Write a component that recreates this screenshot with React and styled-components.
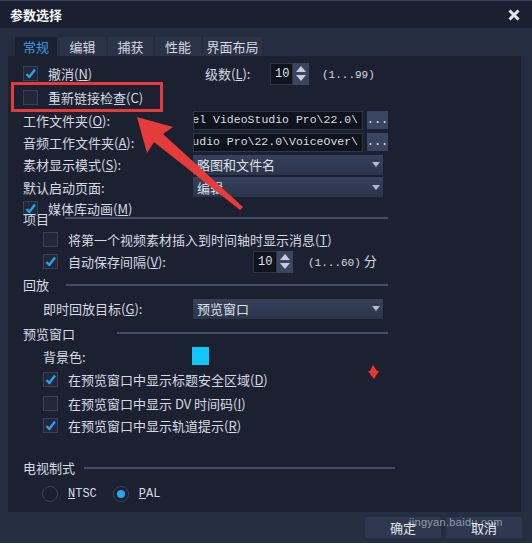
import styled, { createGlobalStyle } from 'styled-components';

const GlobalStyle = createGlobalStyle`
  html, body { margin: 0; padding: 0; background: #252d40; }
  body { font-family: "Noto Sans CJK SC", "Noto Sans", sans-serif; }
`;

const Window = styled.div`
  position: relative;
  width: 532px;
  height: 543px;
  background: #252d40;
  display: flex;
  flex-direction: column;
  overflow: hidden;
  color: #d6dae2;
  font-size: 13px;
  line-height: 1;
`;

const TitleBar = styled.div`
  height: 28px;
  box-sizing: border-box;
  border-top: 1px solid #3a4259;
  background: #1b2030;
  display: flex;
  align-items: center;
  justify-content: space-between;
  padding: 0 12px 0 10px;
`;

const Title = styled.div`
  font-weight: bold;
  font-size: 13px;
  color: #f4f5f8;
`;

const TabRow = styled.div`
  height: 28px;
  display: flex;
  align-items: flex-end;
  gap: 2px;
  padding-left: 15px;
`;

const Tab = styled.div`
  width: ${(p) => p.$w}px;
  height: 19px;
  display: flex;
  align-items: center;
  justify-content: center;
  background: ${(p) => (p.$active ? '#1c2131' : '#2b3348')};
  color: ${(p) => (p.$active ? '#3a9be2' : '#d5d9e1')};
`;

const Panel = styled.div`
  margin: 0 11px 0 8px;
  height: 456px;
  box-sizing: border-box;
  background: #1c2131;
  padding: 6px 0 0 15px;
  display: flex;
  flex-direction: column;
`;

const Row = styled.div`
  height: ${(p) => p.$h}px;
  margin-top: ${(p) => p.$mt || 0}px;
  padding-left: ${(p) => p.$indent || 0}px;
  display: flex;
  align-items: center;
  flex-shrink: 0;
`;

const CheckItem = styled.div`
  display: flex;
  align-items: center;
  gap: 10px;
  width: ${(p) => (p.$w ? `${p.$w}px` : 'auto')};
  flex-shrink: 0;
`;

const Box = styled.div`
  width: 15px;
  height: 15px;
  box-sizing: border-box;
  background: #222839;
  border: 1px solid #394157;
  display: flex;
  align-items: center;
  justify-content: center;
`;

const Label = styled.div`
  width: ${(p) => (p.$w ? `${p.$w}px` : 'auto')};
  flex-shrink: 0;
  white-space: nowrap;
`;

const Mono = styled.span`
  font-family: "Liberation Mono", monospace;
  font-size: 11px;
`;

const PathField = styled.div`
  width: 170px;
  height: 19px;
  box-sizing: border-box;
  background: #0f131c;
  border: 1px solid #2f3649;
  display: flex;
  align-items: center;
  justify-content: flex-end;
  overflow: hidden;
  white-space: nowrap;
  padding-right: 4px;
  font-family: "Liberation Mono", monospace;
  font-size: 11.5px;
  color: #d9dde4;
`;

const Browse = styled.div`
  width: 21px;
  height: 18px;
  margin-left: 4px;
  background: #3a4561;
  color: #e6e9ef;
  display: flex;
  align-items: center;
  justify-content: center;
  font-family: "Liberation Mono", monospace;
  font-size: 12px;
`;

const Select = styled.div`
  width: 190px;
  height: 20px;
  box-sizing: border-box;
  background: linear-gradient(#37415b, #2c344b);
  display: flex;
  align-items: center;
  justify-content: space-between;
  padding: 0 3px 0 4px;
  color: #dde1e8;
`;

const Caret = styled.div`
  width: 0;
  height: 0;
  border-left: 4px solid transparent;
  border-right: 4px solid transparent;
  border-top: 5px solid #b3bac8;
`;

const Spin = styled.div`
  display: flex;
  height: 22px;
`;

const SpinValue = styled.div`
  width: ${(p) => p.$w}px;
  box-sizing: border-box;
  background: #0f131c;
  border: 1px solid #2f3649;
  display: flex;
  align-items: center;
  padding-left: 4px;
  font-family: "Liberation Mono", monospace;
  font-size: 12px;
  color: #dfe2e8;
`;

const SpinArrows = styled.div`
  width: 16px;
  background: #3a4560;
  display: flex;
  flex-direction: column;
  align-items: center;
  justify-content: center;
  gap: 3px;
`;

const Tri = styled.div`
  width: 0;
  height: 0;
  border-left: 5px solid transparent;
  border-right: 5px solid transparent;
  ${(p) => (p.$up ? 'border-bottom: 6px solid #c9ceda;' : 'border-top: 6px solid #c9ceda;')}
`;

const Range = styled.div`
  margin-left: ${(p) => p.$ml}px;
  white-space: nowrap;
`;

const Group = styled.div`
  width: ${(p) => p.$w}px;
  height: ${(p) => p.$h}px;
  margin-top: ${(p) => p.$mt || 0}px;
  display: flex;
  align-items: center;
  flex-shrink: 0;
`;

const GroupLine = styled.div`
  flex: 1;
  height: 2px;
  margin-left: ${(p) => p.$gap}px;
  background: #444d67;
`;

const Swatch = styled.div`
  width: 17px;
  height: 18px;
  background: #12c6f6;
`;

const RadioItem = styled.div`
  display: flex;
  align-items: center;
  gap: 10px;
  margin-right: 16px;
  font-family: "Liberation Mono", monospace;
  font-size: 12px;
`;

const RadioDot = styled.div`
  width: 16px;
  height: 16px;
  box-sizing: border-box;
  border-radius: 50%;
  background: #1a1f2d;
  border: 1px solid #3a4257;
  display: flex;
  align-items: center;
  justify-content: center;
  &::after {
    content: '';
    width: 8px;
    height: 8px;
    border-radius: 50%;
    background: ${(p) => (p.$on ? '#1fa9f1' : 'transparent')};
  }
`;

const Footer = styled.div`
  height: 31px;
  display: flex;
  align-items: center;
  justify-content: flex-end;
  gap: 5px;
  padding-right: 10px;
`;

const Button = styled.div`
  width: 76px;
  height: 21px;
  background: #2e3850;
  color: #e4e7ed;
  display: flex;
  align-items: center;
  justify-content: center;
`;

const RedBox = styled.div`
  position: absolute;
  left: 11px;
  top: 82px;
  width: 152px;
  height: 30px;
  box-sizing: border-box;
  border: 3px solid #e63b3b;
`;

const Overlay = styled.svg`
  position: absolute;
  left: 0;
  top: 0;
  pointer-events: none;
`;

const Watermark = styled.div`
  position: absolute;
  left: 409px;
  top: 517px;
  font-family: "Liberation Sans", sans-serif;
  font-size: 11px;
  color: rgba(235, 238, 245, 0.55);
  letter-spacing: 0.3px;
`;

const Check = ({ on }) => (
  <Box>
    {on && (
      <svg width="13" height="13" viewBox="0 0 13 13">
        <path d="M2.5 7 L5.3 10 L11 2.5" fill="none" stroke="#2c9fea" strokeWidth="2.4" strokeLinejoin="round" />
      </svg>
    )}
  </Box>
);

const CheckRow = ({ on, text, w }) => (
  <CheckItem $w={w}>
    <Check on={on} />
    <span>{text}</span>
  </CheckItem>
);

const SpinBox = ({ value, w }) => (
  <Spin>
    <SpinValue $w={w}>{value}</SpinValue>
    <SpinArrows>
      <Tri $up />
      <Tri />
    </SpinArrows>
  </Spin>
);

const Dropdown = ({ value }) => (
  <Select>
    <span>{value}</span>
    <Caret />
  </Select>
);

const GroupHeader = ({ title, gap, w = 365, h, mt }) => (
  <Group $w={w} $h={h} $mt={mt}>
    <span>{title}</span>
    <GroupLine $gap={gap} />
  </Group>
);

const tabs = [
  { name: '常规', w: 42 },
  { name: '编辑', w: 47 },
  { name: '捕获', w: 45 },
  { name: '性能', w: 46 },
  { name: '界面布局', w: 59 },
];

export default function App() {
  return (
    <Window>
      <GlobalStyle />
      <TitleBar>
        <Title>参数选择</Title>
        <svg width="12" height="12" viewBox="0 0 12 12">
          <path d="M1.5 1.5 L10.5 10.5 M10.5 1.5 L1.5 10.5" stroke="#e3e6ec" strokeWidth="3" />
        </svg>
      </TitleBar>
      <TabRow>
        {tabs.map((t, i) => (
          <Tab key={t.name} $w={t.w} $active={i === 0}>{t.name}</Tab>
        ))}
      </TabRow>
      <Panel>
        <Row $h={23}>
          <CheckRow on w={182} text={<>撤消(<u>N</u>)</>} />
          <Label $w={65}>级数(<u>L</u>):</Label>
          <SpinBox value="10" w={23} />
          <Range $ml={13}><Mono>(1...99)</Mono></Range>
        </Row>
        <Row $h={24}>
          <CheckRow text="重新链接检查(C)" />
        </Row>
        <Row $h={22}>
          <Label $w={170}>工作文件夹(<u>O</u>):</Label>
          <PathField>C:\Users\Public\Documents\Corel VideoStudio Pro\22.0\</PathField>
          <Browse>...</Browse>
        </Row>
        <Row $h={22}>
          <Label $w={170}>音频工作文件夹(<u>A</u>):</Label>
          <PathField>C:\Users\Public\Documents\Corel VideoStudio Pro\22.0\VoiceOver\</PathField>
          <Browse>...</Browse>
        </Row>
        <Row $h={23}>
          <Label $w={170}>素材显示模式(<u>S</u>):</Label>
          <Dropdown value="略图和文件名" />
        </Row>
        <Row $h={22}>
          <Label $w={170}>默认启动页面:</Label>
          <Dropdown value="编辑" />
        </Row>
        <Row $h={20}>
          <CheckRow on text={<>媒体库动画(<u>M</u>)</>} />
        </Row>
        <GroupHeader title="项目" gap={16} h={18} mt={-9} />
        <Row $h={22} $mt={1} $indent={20}>
          <CheckRow text={<>将第一个视频素材插入到时间轴时显示消息(<u>T</u>)</>} />
        </Row>
        <Row $h={23} $indent={20}>
          <CheckRow on w={210} text={<>自动保存间隔(<u>V</u>):</>} />
          <SpinBox value="10" w={24} />
          <Range $ml={15}><Mono>(1...60)</Mono> 分</Range>
        </Row>
        <GroupHeader title="回放" gap={17} h={23} />
        <Row $h={25} $indent={20}>
          <Label $w={150}>即时回放目标(<u>G</u>):</Label>
          <Dropdown value="预览窗口" />
        </Row>
        <GroupHeader title="预览窗口" gap={42} h={24} />
        <Row $h={22} $indent={20}>
          <Label $w={149}>背景色:</Label>
          <Swatch />
        </Row>
        <Row $h={25} $indent={20}>
          <CheckRow on text={<>在预览窗口中显示标题安全区域(<u>D</u>)</>} />
        </Row>
        <Row $h={22} $indent={20}>
          <CheckRow text={<>在预览窗口中显示 DV 时间码(<u>I</u>)</>} />
        </Row>
        <Row $h={22} $indent={20}>
          <CheckRow on text={<>在预览窗口中显示轨道提示(<u>R</u>)</>} />
        </Row>
        <GroupHeader title="电视制式" gap={9} w={372} h={23} mt={20} />
        <Row $h={30} $indent={19}>
          <RadioItem>
            <RadioDot />
            <span><u>N</u>TSC</span>
          </RadioItem>
          <RadioItem>
            <RadioDot $on />
            <span><u>P</u>AL</span>
          </RadioItem>
        </Row>
      </Panel>
      <Footer>
        <Button>确定</Button>
        <Button>取消</Button>
      </Footer>

      <RedBox />
      <Overlay width="532" height="543" viewBox="0 0 532 543">
        <polygon
          points="137,117 173,127 163,134 243,207 240,210 154,142 147,153"
          fill="#e63b3b"
        />
        <polygon points="373,365 377,371 379,371 374,379 368,371 370,371" fill="#ef3434" />
      </Overlay>
      <Watermark>jingyan.baidu.com</Watermark>
    </Window>
  );
}
